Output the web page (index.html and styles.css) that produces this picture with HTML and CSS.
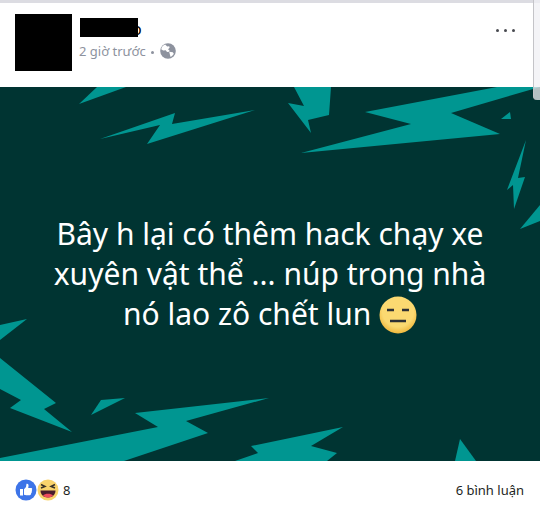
FILE: index.html
```html
<!DOCTYPE html>
<html lang="vi">
<head>
<meta charset="utf-8">
<meta name="viewport" content="width=device-width, initial-scale=1">
<title>Bài viết</title>
<link rel="stylesheet" href="styles.css">
</head>
<body>
<article class="post">
  <header class="header">
    <div class="avatar"></div>
    <div class="meta">
      <div class="name"><span class="name-bar"></span><span class="name-end">o</span></div>
      <div class="time">
        <span>2 giờ trước</span><span class="dot"></span>
        <svg class="globe" viewBox="0 0 16 16" aria-hidden="true">
          <circle cx="8" cy="8" r="7.8" fill="#8d929e"/>
          <path d="M5.200 1.500C3 2.300 1.500 4 1.200 6.200l2 1.300 2.600-.2L7 9l2.200-.2.300-1.400L8 6.200l1.600-1.400-.4-1.500-2 .2z" fill="#fff"/>
          <path d="M9.200 8.800l3.600.5 1 1.500c-.7 1.400-1.700 2.400-3.200 3.100l-.6-2z" fill="#fff"/>
        </svg>
      </div>
    </div>
    <button class="more" type="button" aria-label="Tùy chọn"><i></i><i></i><i></i></button>
  </header>
  <section class="card">
    <svg class="bolts" viewBox="0 87 540 374" preserveAspectRatio="xMidYMid slice" aria-hidden="true">
      <g fill="#009691">
        <path d="M79 104L97 87H126Z"/>
        <path d="M100 139L175 113L172 124L255 110L147 144L160 125Z"/>
        <path d="M294 87H331L329 115L308 120L311 133L288 103L304 106Z"/>
        <path d="M301 153L411 124L365 112L497 87H540L451 113L500 134Z"/>
        <path d="M501 119L510 112L511 119Z"/>
        <path d="M526 140L518 178L525 177L514 209L513 185L507 190Z"/>
        <path d="M520 229L540 205V221Z"/>
        <path d="M0 325L27 319L0 340Z"/>
        <path d="M0 358L56 403L44 409L72 432L10 408L21 400L0 389Z"/>
        <path d="M91 415L101 400L125 398Z"/>
        <path d="M0 458L158 427L135 413L269 398L186 421L208 433L124 461H0Z"/>
        <path d="M235 461L258 453L251 446L343 427L311 446L337 453L327 461Z"/>
        <path d="M455 461L460 439L476 461Z"/>
      </g>
    </svg>
    <p class="text">Bây h lại có thêm hack chạy xe xuyên vật thể ... núp trong nhà nó lao zô chết lun <svg class="face" viewBox="0 0 38 38" role="img" aria-label="Mặt vô cảm">
      <defs><radialGradient id="skin" cx=".5" cy=".4" r=".6"><stop offset=".7" stop-color="#fbd971"/><stop offset="1" stop-color="#efb73c"/></radialGradient></defs>
      <circle cx="19" cy="19" r="18.500" fill="url(#skin)"/>
      <path d="M8 14h7M23 14h7M11 25h16" stroke="#2d3035" stroke-width="2.400"/>
    </svg></p>
  </section>
  <footer class="footer">
    <div class="reactions">
      <svg class="react" viewBox="0 0 22 22" aria-hidden="true">
        <circle cx="11" cy="11" r="10.500" fill="#3d74e8"/>
        <path d="M5 10h3v6.500H5zM9 10.300l2-2.300.5-3.200c1.600-.4 2.300.8 2 2.300L13.200 9h3c1.200 0 1.300 1.500.5 1.900.6.500.5 1.500-.2 1.800.4.600.2 1.300-.4 1.600.1 1-.4 1.900-1.400 1.900h-3.500L9 15.700z" fill="#fff"/>
      </svg>
      <svg class="react" viewBox="0 0 22 22" aria-hidden="true">
        <circle cx="11" cy="11" r="10.500" fill="#f9d36c"/>
        <path d="M4 5.500l4 2-4 1.500M18 5.500l-4 2 4 1.500" fill="none" stroke="#3a3228" stroke-width="1.500"/>
        <path d="M3.500 11.500h15c0 4.200-3 7-7.500 7s-7.500-2.800-7.500-7z" fill="#4a1d2c"/>
        <path d="M6 16.500c2-2.200 8-2.200 10 0-2.500 2.700-7.500 2.700-10 0z" fill="#ee4a5c"/>
      </svg>
      <span class="count">8</span>
    </div>
    <a class="comments" href="#">6 bình luận</a>
  </footer>
  <div class="scroll"></div>
</article>
</body>
</html>
```
FILE: styles.css
```css
* { box-sizing: border-box; }
body { margin: 0; background: #fff; font-family: "Noto Sans", sans-serif; }
.post { position: relative; border-top: 3px solid #dcdce2; }
.header { display: flex; align-items: flex-start; gap: 7px; height: 84px; padding: 11px 25px 0 15px; }
.avatar { width: 57px; height: 57px; background: #000; }
.meta { flex: 1; }
.name { display: flex; height: 26px; padding: 4px 0 0 1px; font-size: 16px; line-height: 22px; color: #000; }
.name-bar { width: 58px; height: 19px; background: #000; }
.name-end { margin-left: -6px; }
.time { display: flex; align-items: center; height: 22px; font-size: 13px; line-height: 22px; color: #8d929e; }
.dot { width: 3px; height: 3px; margin: 2px 6px 0 5px; border-radius: 50%; background: #8d929e; }
.globe { width: 16px; height: 16px; }
.more { display: flex; gap: 5px; margin-top: 13px; padding: 2px 0; border: 0; background: none; }
.more i { width: 3px; height: 3px; border-radius: 50%; background: #484a50; }
.card { position: relative; display: flex; align-items: center; justify-content: center; min-height: 374px; padding: 0 48px; background: #003432; }
.bolts { position: absolute; inset: 0; width: 100%; height: 100%; }
.text { position: relative; margin: 0; max-width: 444px; font-size: 30px; line-height: 40px; text-align: center; color: #fff; }
.face { width: 38px; height: 38px; vertical-align: -9px; }
.footer { display: flex; align-items: center; justify-content: space-between; height: 47px; padding: 11px 16px 0 15px; font-size: 13px; line-height: 22px; color: #1d1f23; }
.reactions { display: flex; align-items: center; }
.react { width: 22px; height: 22px; }
.count { margin-left: 4px; }
.comments { color: inherit; text-decoration: none; }
.scroll { position: absolute; top: -3px; right: 0; width: 7px; height: 100px; border-left: 1px solid #c4c4c8; border-radius: 0 0 0 4px; background: rgba(240, 240, 244, .75); }
```
